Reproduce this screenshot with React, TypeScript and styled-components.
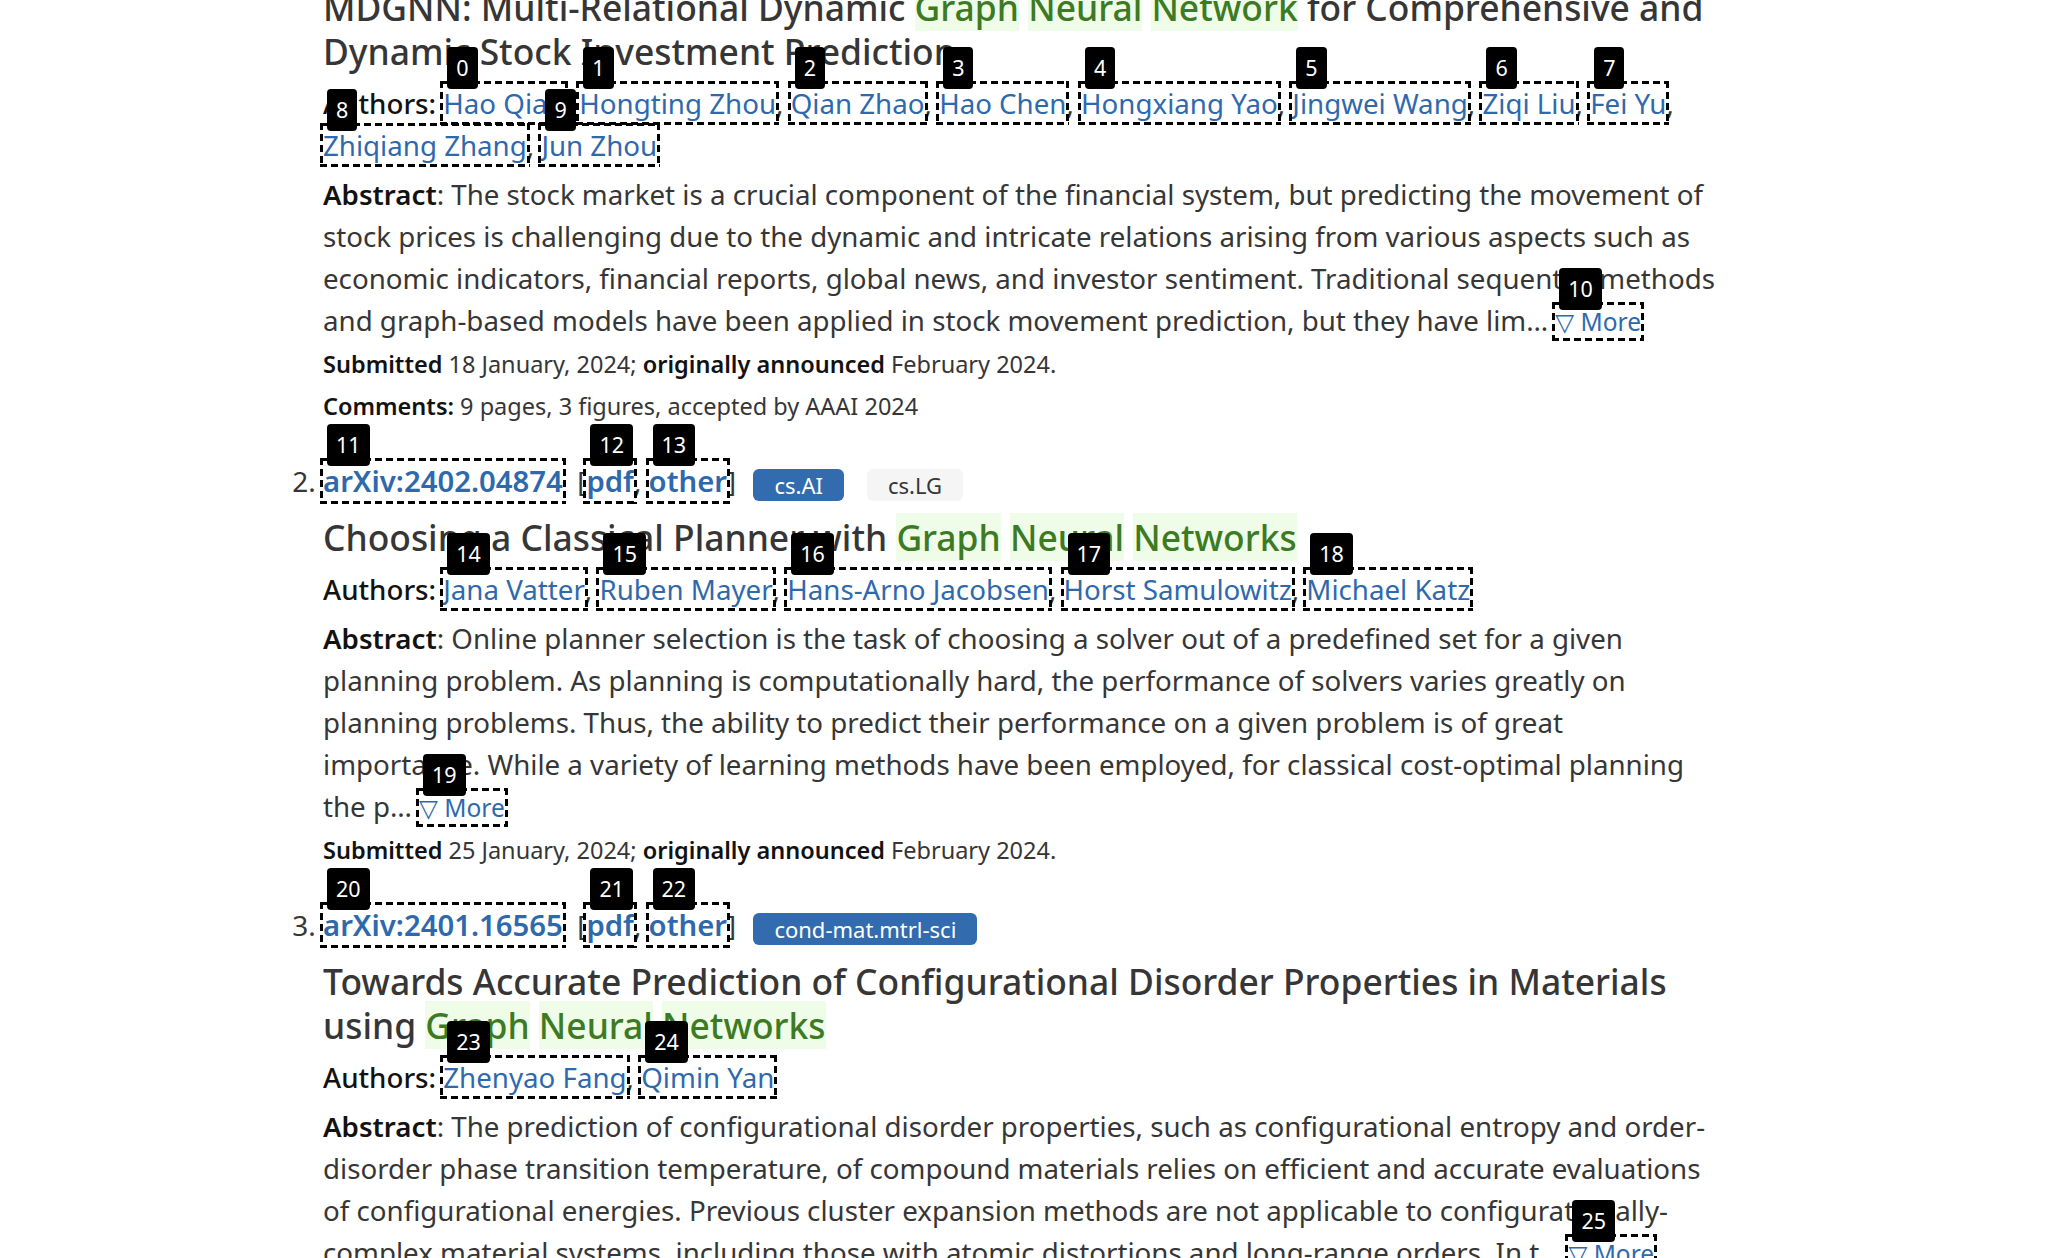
import React from 'react'
import styled, { createGlobalStyle } from 'styled-components'

interface Tag {
  name: string
  primary?: boolean
}

interface Paper {
  id: string
  headMark?: number
  tags: Tag[]
  before: string
  hits: string[]
  after: string
  authors: string[]
  authorMark: number
  abstract: string
  moreMark: number
  submitted: string
  announced: string
  comments?: string
}

const papers: Paper[] = [
  {
    id: '2402.06633',
    tags: [{ name: 'q-fin.ST', primary: true }, { name: 'cs.LG' }],
    before: 'MDGNN: Multi-Relational Dynamic ',
    hits: ['Graph', 'Neural', 'Network'],
    after: ' for Comprehensive and Dynamic Stock Investment Prediction',
    authors: ['Hao Qian', 'Hongting Zhou', 'Qian Zhao', 'Hao Chen', 'Hongxiang Yao', 'Jingwei Wang', 'Ziqi Liu', 'Fei Yu', 'Zhiqiang Zhang', 'Jun Zhou'],
    authorMark: 0,
    abstract:
      'The stock market is a crucial component of the financial system, but predicting the movement of stock prices is challenging due to the dynamic and intricate relations arising from various aspects such as economic indicators, financial reports, global news, and investor sentiment. Traditional sequential methods and graph-based models have been applied in stock movement prediction, but they have lim\u2026',
    moreMark: 10,
    submitted: '18 January, 2024',
    announced: 'February 2024',
    comments: '9 pages, 3 figures, accepted by AAAI 2024',
  },
  {
    id: '2402.04874',
    headMark: 11,
    tags: [{ name: 'cs.AI', primary: true }, { name: 'cs.LG' }],
    before: 'Choosing a Classical Planner with ',
    hits: ['Graph', 'Neural', 'Networks'],
    after: '',
    authors: ['Jana Vatter', 'Ruben Mayer', 'Hans-Arno Jacobsen', 'Horst Samulowitz', 'Michael Katz'],
    authorMark: 14,
    abstract:
      'Online planner selection is the task of choosing a solver out of a predefined set for a given planning problem. As planning is computationally hard, the performance of solvers varies greatly on planning problems. Thus, the ability to predict their performance on a given problem is of great importance. While a variety of learning methods have been employed, for classical cost-optimal planning the p\u2026',
    moreMark: 19,
    submitted: '25 January, 2024',
    announced: 'February 2024',
  },
  {
    id: '2401.16565',
    headMark: 20,
    tags: [{ name: 'cond-mat.mtrl-sci', primary: true }],
    before: 'Towards Accurate Prediction of Configurational Disorder Properties in Materials using ',
    hits: ['Graph', 'Neural', 'Networks'],
    after: '',
    authors: ['Zhenyao Fang', 'Qimin Yan'],
    authorMark: 23,
    abstract:
      'The prediction of configurational disorder properties, such as configurational entropy and order-disorder phase transition temperature, of compound materials relies on efficient and accurate evaluations of configurational energies. Previous cluster expansion methods are not applicable to configurationally-complex material systems, including those with atomic distortions and long-range orders. In t\u2026',
    moreMark: 25,
    submitted: '29 January, 2024',
    announced: 'January 2024',
  },
]

function Marked({ n, children, $head }: { n?: number; children: React.ReactNode; $head?: boolean }) {
  return (
    <MarkLink href="#" $boxed={n !== undefined} $head={$head}>
      {children}
      {n !== undefined && <Badge>{n}</Badge>}
    </MarkLink>
  )
}

function Result({ p }: { p: Paper }) {
  const hm = p.headMark
  return (
    <Item>
      <ListTitle>
        <Marked n={hm} $head>arXiv:{p.id}</Marked>{' '}
        <span>
          &nbsp;[<Marked n={hm !== undefined ? hm + 1 : undefined} $head>pdf</Marked>,{' '}
          <Marked n={hm !== undefined ? hm + 2 : undefined} $head>other</Marked>]&nbsp;
        </span>
        <TagRow>
          {p.tags.map(t => (
            <TagPill key={t.name} $primary={t.primary}>{t.name}</TagPill>
          ))}
        </TagRow>
      </ListTitle>

      <Title>
        {p.before}
        {p.hits.map((h, i) => (
          <React.Fragment key={h}>
            <Hit>{h}</Hit>
            {i < p.hits.length - 1 ? ' ' : ''}
          </React.Fragment>
        ))}
        {p.after}
      </Title>

      <Authors>
        <AuthorsLabel>Authors:</AuthorsLabel>{' '}
        {p.authors.map((a, i) => (
          <React.Fragment key={a}>
            <Marked n={p.authorMark + i}>{a}</Marked>
            {i < p.authors.length - 1 ? ', ' : ''}
          </React.Fragment>
        ))}
      </Authors>

      <Abstract>
        <StrongLabel>Abstract</StrongLabel>: {p.abstract}{' '}
        <MoreLink href="#" $boxed>
          ▽ More
          <Badge>{p.moreMark}</Badge>
        </MoreLink>
      </Abstract>

      <Meta>
        <StrongLabel>Submitted</StrongLabel> {p.submitted}; <StrongLabel>originally announced</StrongLabel> {p.announced}.
      </Meta>
      {p.comments && (
        <Meta>
          <StrongLabel>Comments:</StrongLabel> {p.comments}
        </Meta>
      )}
    </Item>
  )
}

export default function App() {
  return (
    <>
      <GlobalStyle />
      <Page>
        <Results>
          {papers.map(p => (
            <Result key={p.id} p={p} />
          ))}
        </Results>
      </Page>
    </>
  )
}

const GlobalStyle = createGlobalStyle`
  html, body {
    margin: 0;
    padding: 0;
    background: #fff;
  }
  body {
    overflow: hidden;
    font-family: "Noto Sans", "Open Sans", "DejaVu Sans", sans-serif;
    font-size: 27.7px;
    line-height: 1.5;
    color: #363636;
  }
`

const Page = styled.main`
  width: 1402px;
  margin: -70px auto 0;
`

const Results = styled.ol`
  margin: 0;
  padding: 0;
  list-style: decimal outside;
`

const Item = styled.li`
  margin-bottom: 36px;
  &::marker {
    color: #363636;
    font-size: 28px;
  }
`

const ListTitle = styled.p`
  margin: 0;
  line-height: 42px;
`

// dashed frame of the element marker, drawn as an overlay
const dash = (dir: string) => `repeating-linear-gradient(${dir}, #000 0 7px, transparent 7px 11px)`

const MarkLink = styled.a<{ $boxed?: boolean; $head?: boolean }>`
  position: relative;
  color: #2f69ad;
  text-decoration: none;
  white-space: nowrap;
  font-size: ${p => (p.$head ? '29.3px' : 'inherit')};
  font-weight: ${p => (p.$head ? 600 : 400)};
  &::after {
    content: '';
    display: ${p => (p.$boxed ? 'block' : 'none')};
    position: absolute;
    inset: -3px;
    pointer-events: none;
    background:
      ${dash('90deg')} top left / 100% 3px no-repeat,
      ${dash('90deg')} bottom left / 100% 3px no-repeat,
      ${dash('180deg')} top left / 3px 100% no-repeat,
      ${dash('180deg')} top right / 3px 100% no-repeat;
  }
`

const MoreLink = styled(MarkLink)`
  font-size: 24.5px;
`

const Badge = styled.span`
  position: absolute;
  left: 4px;
  bottom: calc(100% - 5px);
  z-index: 5;
  box-sizing: border-box;
  min-width: 30px;
  height: 42px;
  padding: 0 9px;
  border-radius: 4px;
  background: #000;
  color: #fff;
  font-family: "Noto Sans", sans-serif;
  font-size: 21.5px;
  font-weight: 400;
  line-height: 42px;
  text-align: center;
`

const TagRow = styled.span`
  display: inline-flex;
  gap: 23px;
  margin-left: 10px;
  vertical-align: middle;
`

const TagPill = styled.span<{ $primary?: boolean }>`
  display: inline-flex;
  align-items: center;
  height: 32px;
  padding: 0 21px;
  border-radius: 6px;
  font-size: 22px;
  line-height: 1;
  background: ${p => (p.$primary ? '#326cae' : '#f5f5f5')};
  color: ${p => (p.$primary ? '#fff' : '#363636')};
`

const Title = styled.p`
  margin: 13px 0 0;
  font-size: 35.4px;
  line-height: 44px;
  font-weight: 500;
  color: #363636;
`

const Hit = styled.span`
  color: #3c7a23;
  background: #effce8;
`

const Authors = styled.p`
  margin: 9px 0 0;
  line-height: 42px;
`

const AuthorsLabel = styled.span`
  color: #121212;
  font-weight: 500;
`

const Abstract = styled.p`
  margin: 7px 0 0;
  line-height: 42px;
`

const StrongLabel = styled.span`
  color: #121212;
  font-weight: 600;
`

const Meta = styled.p`
  margin: 3px 0 0;
  font-size: 23.5px;
  line-height: 36px;
  & + & {
    margin-top: 6px;
  }
`
